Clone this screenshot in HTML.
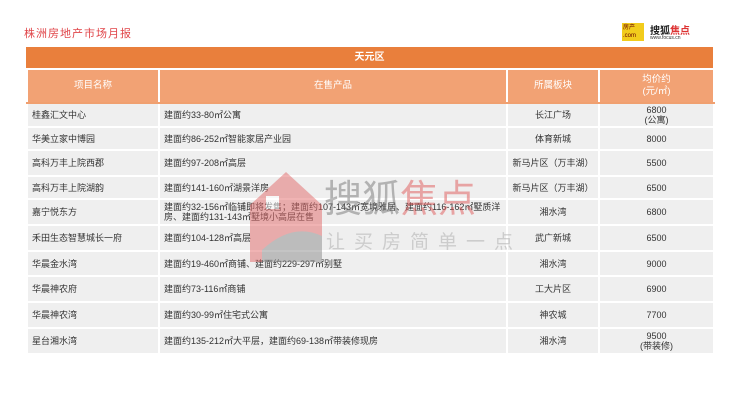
<!DOCTYPE html>
<html><head><meta charset="utf-8"><style>
*{margin:0;padding:0;box-sizing:border-box}
body{width:740px;height:416px;background:#fff;position:relative;overflow:hidden;font-family:"Liberation Sans","Noto Sans CJK SC",sans-serif}
.title{position:absolute;left:24px;top:25px;font-size:11px;color:#e0464a;letter-spacing:1px}
.tb{position:absolute;left:26px;top:47px;width:687px}
.band{height:21px;background:#e97f3c;color:#fff;font-size:10px;text-align:center;line-height:21px;font-weight:bold}
table{border-collapse:collapse;width:687px;margin-top:2px;table-layout:fixed}
td{border:2px solid #fff;font-size:9px;color:#333;padding:0 4px;background:#efefef;line-height:10px}
th{border:2px solid #fff;border-top:0;background:#f2a274;color:#fff;font-weight:normal;font-size:9.5px;height:33px;line-height:12px}
tr.h th{border-bottom:2px solid #f0a070}
.c{text-align:center}
.wm{position:absolute;left:0;top:0}
</style></head><body>
<div class="title">株洲房地产市场月报</div>
<div style="position:absolute;left:622px;top:23px;width:22px;height:18px;background:#f2cc1c;font-size:6px;color:#600;line-height:8px;padding:1px">房产<br>.com</div>
<div style="position:absolute;left:650px;top:22px;font-size:10px;color:#222;font-weight:bold">搜狐<span style="color:#d33">焦点</span></div>
<div style="position:absolute;left:650px;top:35px;font-size:5px;color:#333">www.focus.cn</div>
<div class="tb">
<div class="band">天元区</div>
<table>
<colgroup><col style="width:132px"><col style="width:348px"><col style="width:92px"><col style="width:115px"></colgroup>
<tr class="h"><th>项目名称</th><th>在售产品</th><th>所属板块</th><th>均价约<br>(元/㎡)</th></tr>
<tr style="height:24px"><td>桂鑫汇文中心</td><td>建面约33-80㎡公寓</td><td class="c">长江广场</td><td class="c">6800<br>(公寓)</td></tr>
<tr style="height:23px"><td>华美立家中博园</td><td>建面约86-252㎡智能家居产业园</td><td class="c">体育新城</td><td class="c">8000</td></tr>
<tr style="height:26px"><td>高科万丰上院西郡</td><td>建面约97-208㎡高层</td><td class="c">新马片区（万丰湖）</td><td class="c">5500</td></tr>
<tr style="height:23px"><td>高科万丰上院湖韵</td><td>建面约141-160㎡湖景洋房</td><td class="c">新马片区（万丰湖）</td><td class="c">6500</td></tr>
<tr style="height:26px"><td>嘉宁悦东方</td><td>建面约32-156㎡临铺即将发售；建面约107-143㎡宽境雅居、建面约116-162㎡墅质洋房、建面约131-143㎡墅境小高层在售</td><td class="c">湘水湾</td><td class="c">6800</td></tr>
<tr style="height:26px"><td>禾田生态智慧城长一府</td><td>建面约104-128㎡高层</td><td class="c">武广新城</td><td class="c">6500</td></tr>
<tr style="height:25px"><td>华晨金水湾</td><td>建面约19-460㎡商铺、建面约229-297㎡别墅</td><td class="c">湘水湾</td><td class="c">9000</td></tr>
<tr style="height:26px"><td>华晨神农府</td><td>建面约73-116㎡商铺</td><td class="c">工大片区</td><td class="c">6900</td></tr>
<tr style="height:26px"><td>华晨神农湾</td><td>建面约30-99㎡住宅式公寓</td><td class="c">神农城</td><td class="c">7700</td></tr>
<tr style="height:26px"><td>星台湘水湾</td><td>建面约135-212㎡大平层，建面约69-138㎡带装修现房</td><td class="c">湘水湾</td><td class="c">9500<br>(带装修)</td></tr>
</table></div>
<svg class="wm" width="740" height="416" style="opacity:.5">
<path d="M250 205 L286 172 L322 205 L322 262 L250 262 Z" fill="#e26a6a"/>
<path d="M262 250 Q292 222 322 236 L322 262 L262 262 Z" fill="#8a8a8a"/>
<rect x="266" y="196" width="13" height="13" fill="#fff"/>
<text x="324" y="212" font-size="38" fill="#777" font-family="Noto Sans CJK SC,sans-serif">搜狐<tspan fill="#e05a5a">焦点</tspan></text>
<text x="326" y="248" font-size="19" fill="#aaa" letter-spacing="9" font-family="Noto Sans CJK SC,sans-serif">让买房简单一点</text>
</svg>
</body></html>
